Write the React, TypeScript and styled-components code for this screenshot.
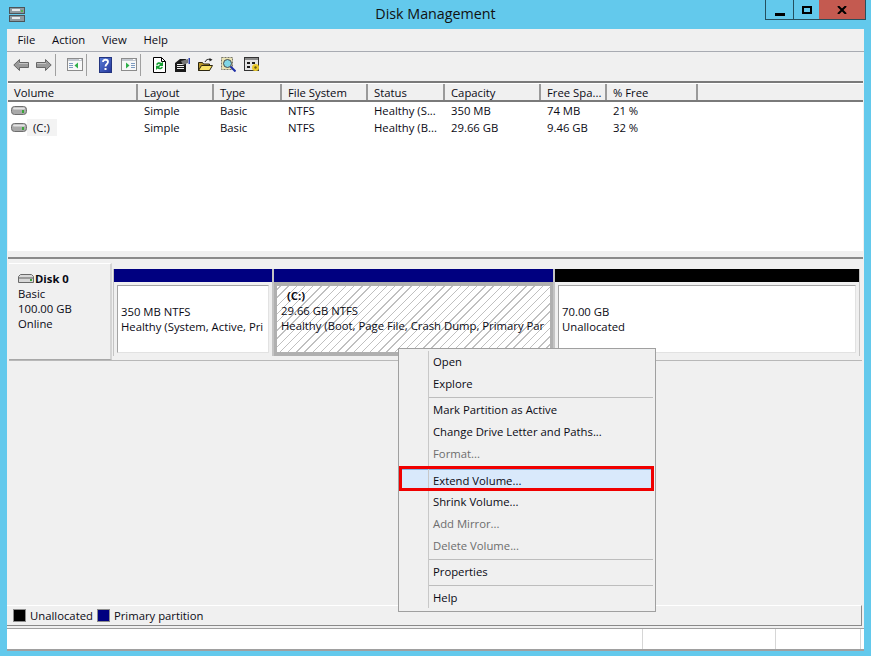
import React from "react";
import styled, { createGlobalStyle } from "styled-components";

const GlobalStyle = createGlobalStyle`
  html, body {
    margin: 0;
    padding: 0;
    background: #63c9ec;
  }
  * {
    box-sizing: border-box;
  }
`;

const Screen = styled.div`
  position: relative;
  display: flex;
  flex-flow: column nowrap;
  width: 871px;
  height: 656px;
  overflow: hidden;
  background: #63c9ec;
  font-family: "Open Sans", "Noto Sans", sans-serif;
  font-size: 11.3px;
  color: #0a0a14;
`;

const TitleBar = styled.div`
  display: flex;
  align-items: flex-start;
  height: 29px;
  flex: none;
  padding-left: 9px;
`;

const AppIcon = styled.div`
  display: flex;
  flex: none;
  margin-top: 7px;
  width: 16px;
`;

const TitleText = styled.div`
  flex: 1;
  text-align: center;
  font-size: 14.3px;
  line-height: 28px;
  color: #111;
  padding-right: 25px;
`;

const WindowButtons = styled.div`
  position: absolute;
  top: 0;
  left: 765px;
  display: flex;
  height: 20px;
  border: 1px solid #24505f;
  border-top: none;
`;

const WindowButton = styled.div<{ $w: number; $close?: boolean }>`
  display: flex;
  align-items: center;
  justify-content: center;
  width: ${(p) => p.$w}px;
  background: ${(p) => (p.$close ? "#c45a50" : "transparent")};
  border-left: ${(p) => (p.$close ? "none" : "1px solid #24505f")};
  &:first-child {
    border-left: none;
  }
`;

const Client = styled.div`
  display: flex;
  flex-flow: column nowrap;
  width: 857px;
  height: 622px;
  margin-left: 7px;
  flex: none;
  background: #f0f0f0;
`;

const MenuBar = styled.div`
  display: flex;
  height: 23px;
  flex: none;
  align-items: flex-start;
  padding-left: 2px;
  border-bottom: 1px solid #a8abb2;
`;

const MenuEntry = styled.div`
  padding: 0 8.4px;
  line-height: 22px;
`;

const ToolBar = styled.div`
  display: flex;
  align-items: center;
  height: 29px;
  flex: none;
  padding: 0 0 4px 2px;
`;

const ToolSep = styled.div`
  width: 1px;
  height: 22px;
  margin-right: 7px;
  flex: none;
  background: #a0a0a0;
`;

const ToolIcon = styled.div`
  display: flex;
  align-items: center;
  justify-content: center;
  flex: none;
  width: 23px;
  height: 24px;
`;

const VolumeList = styled.div`
  display: flex;
  flex-flow: column nowrap;
  height: 170px;
  flex: none;
  margin: 0 1px;
  border-top: 2px solid #7a7a7a;
  background: #fff;
`;

const columns = "130px 76px 68px 86px 77px 96px 66px 91px 1fr";

const HeaderRow = styled.div`
  display: grid;
  grid-template-columns: ${columns};
  height: 19px;
  flex: none;
  background: #f0f0f0;
  border-top: 1px solid #fff;
  border-bottom: 2px solid #7a7a7a;
`;

const HeaderCell = styled.div`
  padding-left: 6px;
  line-height: 18px;
  white-space: nowrap;
  overflow: hidden;
  border-right: 2px solid #9a9a9a;
  &:last-child {
    border-right: none;
  }
`;

const ListRows = styled.div`
  display: flex;
  flex-flow: column nowrap;
  flex: 1;
`;

const ListRow = styled.div`
  display: grid;
  grid-template-columns: ${columns};
  height: 17px;
  line-height: 17px;
`;

const ListCell = styled.div`
  padding-left: 6px;
  white-space: nowrap;
  overflow: hidden;
`;

const VolumeCell = styled.div`
  display: flex;
  align-items: center;
  padding-left: 3px;
`;

const DriveLabel = styled.span`
  background: #f3f3f3;
  padding: 0 7px 0 6px;
`;

const Splitter = styled.div`
  height: 8px;
  flex: none;
  margin: 0 1px;
  border-bottom: 2px solid #8a8a8a;
`;

const DiskArea = styled.div`
  display: flex;
  flex-flow: column nowrap;
  flex: 1;
  min-height: 0;
  padding: 4px 0 0 2px;
`;

const DiskRow = styled.div`
  display: flex;
  height: 98px;
  flex: none;
  margin-right: 2px;
  border-bottom: 1px solid #b8b8b8;
`;

const DiskLabel = styled.div`
  width: 103px;
  flex: none;
  padding: 7px 0 0 9px;
  line-height: 15px;
  border-top: 1px solid #fff;
  border-right: 2px solid #d4d4d4;
  border-bottom: 1px solid #a8a8a8;
`;

const DiskName = styled.div`
  display: flex;
  align-items: center;
  height: 15px;
  gap: 1px;
  font-weight: 700;
`;

const Partitions = styled.div`
  display: flex;
  flex: 1;
  padding: 6px 0 0 2px;
  gap: 2px;
`;

const Partition = styled.div<{ $w: number; $bar: string }>`
  display: flex;
  flex-flow: column nowrap;
  width: ${(p) => p.$w}px;
  height: 87px;
  flex: none;
  border-top: 13px solid ${(p) => p.$bar};
  box-shadow: -1px 0 0 #c4c4c4, 1px 0 0 #c4c4c4;
`;

const PartitionBody = styled.div`
  flex: 1;
  margin: 3px;
  padding: 18px 0 0 3px;
  border: 1px solid #a4a4a4;
  border-right-color: #e2e2e2;
  border-bottom-color: #e2e2e2;
  line-height: 15px;
  white-space: nowrap;
  overflow: hidden;
  background: #fff;
`;

const SelectedBody = styled.div`
  flex: 1;
  padding: 2px 0 0 4px;
  border-style: solid;
  border-color: #b0b0b0;
  border-width: 4px 3px;
  line-height: 15px;
  white-space: nowrap;
  overflow: hidden;
  background: repeating-linear-gradient(-45deg, #fff 0 4.8px, #c0c0c0 4.8px 5.8px);
`;

const DriveTitle = styled.div`
  font-weight: 700;
  padding-left: 6px;
`;

const Legend = styled.div`
  display: flex;
  align-items: center;
  height: 21px;
  flex: none;
  margin: auto 2px 2px -2px;
  padding-left: 7px;
  border-top: 1px solid #fff;
  border-right: 1px solid #8a8a8a;
  border-bottom: 1px solid #8a8a8a;
`;

const Swatch = styled.span<{ $c: string }>`
  width: 11px;
  height: 11px;
  margin-right: 5px;
  flex: none;
  background: ${(p) => p.$c};
  outline: 1px solid #8c8c8c;
`;

const LegendText = styled.span`
  margin-right: 5px;
`;

const StatusBar = styled.div`
  display: grid;
  grid-template-columns: 636px 133px 85px;
  height: 23px;
  flex: none;
  background: #fff;
  border-top: 1px solid #a0a0a0;
  border-bottom: 2px solid #a0a0a0;
`;

const StatusCell = styled.div`
  border-right: 1px solid #d6d6d6;
`;

const ContextMenu = styled.div`
  position: absolute;
  left: 398px;
  top: 348px;
  display: flex;
  flex-flow: column nowrap;
  width: 258px;
  height: 264px;
  padding: 2px;
  background: #f0f0f0;
  border: 1px solid #a0a0a0;
`;

const MenuItem = styled.div<{ $off?: boolean; $active?: boolean }>`
  height: 22px;
  flex: none;
  line-height: 21px;
  padding-left: ${(p) => (p.$active ? "31px" : "32px")};
  color: ${(p) => (p.$off ? "#6d6d6d" : "#0a0a14")};
  border: ${(p) => (p.$active ? "1px solid #7db5e6" : "none")};
  background: ${(p) => (p.$active ? "#d9e9fb" : "transparent")};
`;

const MenuGutter = styled.div`
  position: absolute;
  left: 29px;
  top: 2px;
  bottom: 3px;
  width: 1px;
  background: #c8c8c8;
`;

const MenuDivider = styled.div`
  height: 1px;
  flex: none;
  margin: 2px 0 1px 27px;
  background: #bdbdbd;
`;

const RedFrame = styled.div`
  position: absolute;
  left: 0;
  top: 117px;
  width: 255px;
  height: 25px;
  border: 3px solid #f00000;
  pointer-events: none;
`;

const DriveIcon = () => (
  <svg width="16" height="9" viewBox="0 0 16 9">
    <rect x="0.5" y="0.5" width="15" height="8" rx="3" fill="#a9a9a9" stroke="#6e6e6e" />
    <rect x="2" y="1.5" width="12" height="2" rx="1" fill="#e4e4e4" />
    <rect x="11" y="4" width="2" height="3" fill="#3aa53a" />
  </svg>
);

const DiskGlyph = () => (
  <svg width="16" height="9" viewBox="0 0 16 9">
    <path d="M2.5.5h11l2 2v6H.5v-6z" fill="#d8d8d8" stroke="#6a6a6a" />
    <rect x="1" y="3" width="14" height="2" fill="#9b9b9b" />
    <rect x="12" y="5" width="2" height="2" fill="#3aa53a" />
  </svg>
);

const AppGlyph = () => (
  <svg width="16" height="15" viewBox="0 0 16 15" shapeRendering="crispEdges">
    <rect x="0.5" y="0.5" width="15" height="6" fill="#8d9aa0" stroke="#4c5458" />
    <rect x="3" y="2" width="8" height="2" fill="#e6eaec" />
    <rect x="12" y="3" width="2" height="2" fill="#52b052" />
    <rect x="0.5" y="8.5" width="15" height="6" fill="#8d9aa0" stroke="#4c5458" />
    <rect x="3" y="10" width="8" height="2" fill="#e6eaec" />
  </svg>
);

const ArrowLeft = () => (
  <svg width="16" height="12" viewBox="0 0 16 12">
    <path d="M6.5.5 .8 6l5.7 5.5v-3h9v-5h-9z" fill="#9a9a9a" stroke="#666" />
    <path d="M6 4.5h9" stroke="#c4c4c4" />
  </svg>
);

const ArrowRight = () => (
  <svg width="16" height="12" viewBox="0 0 16 12">
    <path d="M9.5.5 15.2 6l-5.700 5.5v-3h-9v-5h9z" fill="#9a9a9a" stroke="#666" />
    <path d="M1 4.5h9" stroke="#c4c4c4" />
  </svg>
);

const PaneIcon = ({ flip }: { flip?: boolean }) => (
  <svg width="16" height="13" viewBox="0 0 16 13" shapeRendering="crispEdges">
    <rect x="0.5" y="0.5" width="15" height="12" fill="#f8f8f8" stroke="#8c8c8c" />
    <rect x="1" y="1" width="14" height="2" fill="#c4c9d0" />
    <rect x="12" y="1" width="2" height="1" fill="#ffffff" />
    {flip ? (
      <>
        <rect x="10" y="5" width="4" height="1" fill="#7d9bc0" />
        <rect x="10" y="7" width="4" height="1" fill="#7d9bc0" />
        <rect x="10" y="9" width="4" height="1" fill="#7d9bc0" />
        <path d="M5 4.5v6l3.5-3z" fill="#2fb04a" shapeRendering="auto" />
      </>
    ) : (
      <>
        <rect x="2" y="5" width="4" height="1" fill="#7d9bc0" />
        <rect x="2" y="7" width="4" height="1" fill="#7d9bc0" />
        <rect x="2" y="9" width="4" height="1" fill="#7d9bc0" />
        <path d="M11 4.5v6l-3.5-3z" fill="#2fb04a" shapeRendering="auto" />
      </>
    )}
  </svg>
);

const HelpIcon = () => (
  <svg width="13" height="16" viewBox="0 0 13 16">
    <defs>
      <linearGradient id="helpFill" x1="0" y1="0" x2="1" y2="1">
        <stop offset="0" stopColor="#5c7fd8" />
        <stop offset="1" stopColor="#23349a" />
      </linearGradient>
    </defs>
    <rect x="0.5" y="0.5" width="12" height="15" fill="url(#helpFill)" stroke="#24357f" />
    <path d="M4 5c0-3 5-3 5 0 0 2-2.5 2-2.5 4.5" fill="none" stroke="#fff" strokeWidth="1.8" />
    <rect x="5.5" y="11" width="2" height="2" fill="#fff" />
  </svg>
);

const RefreshIcon = () => (
  <svg width="13" height="16" viewBox="0 0 13 16">
    <path d="M.5.5h8l4 4v11H.5z" fill="#fff" stroke="#000" />
    <path d="M8.5.5v4h4" fill="none" stroke="#000" />
    <path d="M3 7.5a3.5 3.5 0 0 1 5.5-1.5L10 4.5V9H5.5L7 7.5a1.8 1.8 0 0 0-2.5.5z" fill="#17a034" />
    <path d="M10 10a3.5 3.5 0 0 1-5.5 1.5L3 13V8.800h4.5L6 10.200a1.8 1.8 0 0 0 2.5-.4z" fill="#17a034" />
  </svg>
);

const PropsIcon = () => (
  <svg width="15" height="14" viewBox="0 0 15 14">
    <path d="M0 5l5-4h6v13H0z" fill="#1a1a1a" />
    <path d="M2 6.5h7M2 8.5h7M2 10.5h7" stroke="#f0f0f0" />
    <path d="M6 3l7-2v4l-5 2z" fill="#777" />
    <rect x="13.5" y="0" width="1.5" height="6" fill="#2b3fa8" />
  </svg>
);

const FolderIcon = () => (
  <svg width="15" height="13" viewBox="0 0 15 13">
    <path d="M.5 4.5h4l1 1.5h6v6.5H.5z" fill="#b8962a" stroke="#2c2610" />
    <path d="M.5 12.5l3-5h11l-3 5z" fill="#f8e266" stroke="#2c2610" />
    <path d="M7 4c1-2.5 3-3 5-2.5" fill="none" stroke="#222" />
    <path d="M11.5 0l3 1.8-3 1.8z" fill="#222" />
  </svg>
);

const SearchIcon = () => (
  <svg width="15" height="15" viewBox="0 0 15 15">
    <rect x="0.5" y="0.5" width="11" height="12" fill="#e9e3b4" stroke="#77776a" strokeDasharray="2 1" />
    <circle cx="6.5" cy="6.5" r="4" fill="#7fd6e6" stroke="#4a4a4a" />
    <path d="M9.5 9.5l5 5" stroke="#1f2fa8" strokeWidth="2" />
  </svg>
);

const SettingsIcon = () => (
  <svg width="16" height="15" viewBox="0 0 16 15" shapeRendering="crispEdges">
    <rect x="0.5" y="0.5" width="14" height="13" fill="#e4e4e4" stroke="#333" />
    <rect x="1" y="1" width="13" height="2" fill="#8a8a8a" />
    <path d="M3 5h3v2H3zM3 9h3v2H3zM8 5h3v2H8z" fill="#1c1c1c" />
    <circle cx="11.5" cy="10.5" r="3.5" fill="#eccb2c" shapeRendering="auto" />
    <circle cx="11.5" cy="10.5" r="1.2" fill="#6b5a10" shapeRendering="auto" />
  </svg>
);

const rows = [
  { name: "", status: "Healthy (S...", cap: "350 MB", free: "74 MB", pct: "21 %" },
  { name: "(C:)", status: "Healthy (B...", cap: "29.66 GB", free: "9.46 GB", pct: "32 %" },
];

const headers = ["Volume", "Layout", "Type", "File System", "Status", "Capacity", "Free Spa...", "% Free", ""];

export default function App() {
  return (
    <Screen>
      <GlobalStyle />
      <TitleBar>
        <AppIcon>
          <AppGlyph />
        </AppIcon>
        <TitleText>Disk Management</TitleText>
        <WindowButtons>
          <WindowButton $w={27}>
            <svg width="10" height="13" viewBox="0 0 10 13">
              <rect y="10" width="10" height="3" fill="#000" />
            </svg>
          </WindowButton>
          <WindowButton $w={26}>
            <svg width="10" height="8" viewBox="0 0 10 8">
              <rect x="1" y="1" width="8" height="6" fill="none" stroke="#000" strokeWidth="2" />
            </svg>
          </WindowButton>
          <WindowButton $w={46} $close>
            <svg width="10" height="8" viewBox="0 0 10 8">
              <path d="M1 0l4 4 4-4M1 8l4-4 4 4" fill="none" stroke="#000" strokeWidth="2" />
            </svg>
          </WindowButton>
        </WindowButtons>
      </TitleBar>

      <Client>
        <MenuBar>
          <MenuEntry>File</MenuEntry>
          <MenuEntry>Action</MenuEntry>
          <MenuEntry>View</MenuEntry>
          <MenuEntry>Help</MenuEntry>
        </MenuBar>

        <ToolBar>
          <ToolIcon><ArrowLeft /></ToolIcon>
          <ToolIcon><ArrowRight /></ToolIcon>
          <ToolSep />
          <ToolIcon><PaneIcon /></ToolIcon>
          <ToolSep />
          <ToolIcon><HelpIcon /></ToolIcon>
          <ToolIcon><PaneIcon flip /></ToolIcon>
          <ToolSep />
          <ToolIcon><RefreshIcon /></ToolIcon>
          <ToolIcon><PropsIcon /></ToolIcon>
          <ToolIcon><FolderIcon /></ToolIcon>
          <ToolIcon><SearchIcon /></ToolIcon>
          <ToolIcon><SettingsIcon /></ToolIcon>
        </ToolBar>

        <VolumeList>
          <HeaderRow>
            {headers.map((h, i) => (
              <HeaderCell key={i}>{h}</HeaderCell>
            ))}
          </HeaderRow>
          <ListRows>
            {rows.map((r) => (
              <ListRow key={r.cap}>
                <VolumeCell>
                  <DriveIcon />
                  {r.name && <DriveLabel>{r.name}</DriveLabel>}
                </VolumeCell>
                <ListCell>Simple</ListCell>
                <ListCell>Basic</ListCell>
                <ListCell>NTFS</ListCell>
                <ListCell>{r.status}</ListCell>
                <ListCell>{r.cap}</ListCell>
                <ListCell>{r.free}</ListCell>
                <ListCell>{r.pct}</ListCell>
              </ListRow>
            ))}
          </ListRows>
        </VolumeList>

        <Splitter />

        <DiskArea>
          <DiskRow>
            <DiskLabel>
              <DiskName>
                <DiskGlyph />
                Disk 0
              </DiskName>
              <div>Basic</div>
              <div>100.00 GB</div>
              <div>Online</div>
            </DiskLabel>
            <Partitions>
              <Partition $w={158} $bar="#000080">
                <PartitionBody>
                  <div>350 MB NTFS</div>
                  <div>Healthy (System, Active, Pri</div>
                </PartitionBody>
              </Partition>
              <Partition $w={279} $bar="#000080">
                <SelectedBody>
                  <DriveTitle>(C:)</DriveTitle>
                  <div>29.66 GB NTFS</div>
                  <div>Healthy (Boot, Page File, Crash Dump, Primary Par</div>
                </SelectedBody>
              </Partition>
              <Partition $w={304} $bar="#000000">
                <PartitionBody>
                  <div>70.00 GB</div>
                  <div>Unallocated</div>
                </PartitionBody>
              </Partition>
            </Partitions>
          </DiskRow>

          <Legend>
            <Swatch $c="#000000" />
            <LegendText>Unallocated</LegendText>
            <Swatch $c="#000080" />
            <LegendText>Primary partition</LegendText>
          </Legend>
        </DiskArea>

        <StatusBar>
          <StatusCell />
          <StatusCell />
          <StatusCell />
        </StatusBar>
      </Client>

      <ContextMenu>
        <MenuGutter />
        <MenuItem>Open</MenuItem>
        <MenuItem>Explore</MenuItem>
        <MenuDivider />
        <MenuItem>Mark Partition as Active</MenuItem>
        <MenuItem>Change Drive Letter and Paths...</MenuItem>
        <MenuItem $off>Format...</MenuItem>
        <MenuDivider />
        <MenuItem $active>Extend Volume...</MenuItem>
        <MenuItem>Shrink Volume...</MenuItem>
        <MenuItem $off>Add Mirror...</MenuItem>
        <MenuItem $off>Delete Volume...</MenuItem>
        <MenuDivider />
        <MenuItem>Properties</MenuItem>
        <MenuDivider />
        <MenuItem>Help</MenuItem>
        <RedFrame />
      </ContextMenu>
    </Screen>
  );
}
